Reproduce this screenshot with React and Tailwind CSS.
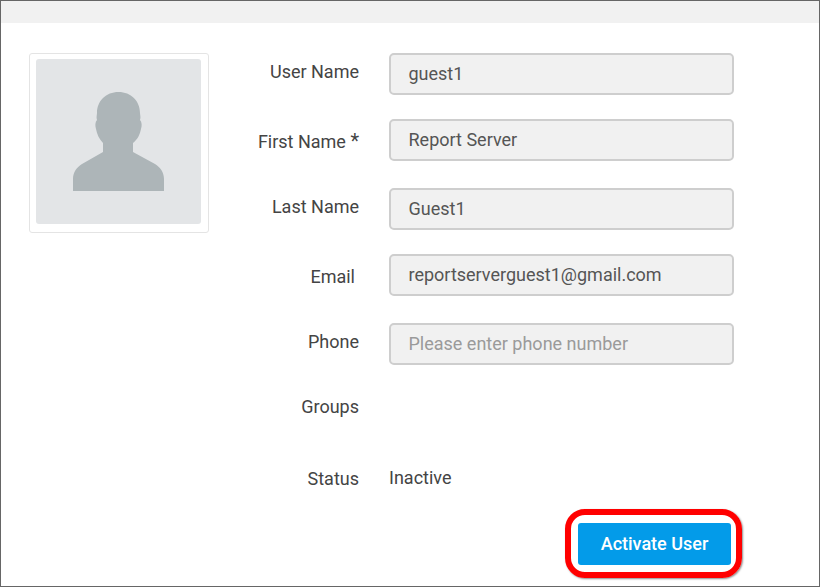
const fields = [
  { label: "User Name", value: "guest1", mb: "mb-[24px]", lt: "-translate-y-[2px]" },
  { label: <>First Name <span className="text-[20px] leading-none">*</span></>, value: "Report Server", mb: "mb-[27px]", lt: "translate-y-[1px]" },
  { label: "Last Name", value: "Guest1", mb: "mb-[24px]", lt: "-translate-y-[2px]" },
  { label: "Email", value: "reportserverguest1@gmail.com", mb: "mb-[27px]", lt: "-translate-x-[4px] translate-y-[2px]" },
  { label: "Phone", value: "Please enter phone number", placeholder: true, mb: "mb-[30px]", lt: "-translate-y-[2px]" },
];

function Avatar() {
  return (
    <div className="w-[180px] h-[180px] border border-[#e4e4e4] rounded-[3px] px-[6px] pt-[5px] shrink-0">
      <div className="w-[165px] h-[165px] bg-[#e3e5e7] rounded-[3px] flex items-start justify-center">
        <svg width="165" height="165" viewBox="0 0 165 165" className="block">
          <path
            fill="#adb5b8"
            d="M37 132 L37 120 C37 113 41 108 46 105 L67 93 L67 84 C63 80 61 75 60 70 C59 67 59 63 61 61 C60 58 61 56 61 54 C61 42 70 33 82.500 33 C95 33 104 42 104 54 C104 56 105 58 104 61 C106 63 106 67 105 70 C104 75 102 80 97 84 L97 93 L119 105 C124 108 128 113 128 120 L128 132 Z"
          />
        </svg>
      </div>
    </div>
  );
}

export default function App() {
  return (
    <div
      className="w-[820px] h-[587px] bg-white border border-[#666666] overflow-hidden text-[18px] text-[#444444]"
      style={{ fontFamily: "Roboto, sans-serif" }}
    >
      <div className="h-[22px] bg-[#f1f1f1]" />
      <div className="flex pl-[28px] pt-[30px]">
        <Avatar />
        <div className="ml-[30px] flex flex-col">
          {fields.map((f, i) => (
            <div key={i} className={`flex items-center h-[42px] ${f.mb}`}>
              <div className={`w-[120px] text-right text-[#444444] leading-none ${f.lt}`}>{f.label}</div>
              <div
                className={`ml-[30px] w-[345px] h-[42px] bg-[#f1f1f1] border-2 border-[#cecece] rounded-[5px] pl-[17.5px] pb-[2px] flex items-center ${
                  f.placeholder ? "text-[#9a9a9a]" : "text-[#555555]"
                }`}
              >
                {f.value}
              </div>
            </div>
          ))}
          <div className="flex items-center h-[24px] mb-[47px]">
            <div className="w-[120px] text-right leading-none">Groups</div>
          </div>
          <div className="flex items-center h-[24px]">
            <div className="w-[120px] text-right leading-none translate-y-[1px]">Status</div>
            <div className="ml-[30px] leading-none">Inactive</div>
          </div>
          <div className="flex justify-end mt-[19px] -mr-[8px]">
            <div className="w-[177px] h-[69px] border-[6px] border-[#ff0000] rounded-[20px] shadow-[1px_1px_2px_rgba(0,0,0,0.45)] flex items-center justify-end pr-[5px]">
              <div className="w-[153px] h-[42px] bg-[#039be9] rounded-[3px] text-white font-medium flex items-center justify-center">
                Activate User
              </div>
            </div>
          </div>
        </div>
      </div>
    </div>
  );
}
